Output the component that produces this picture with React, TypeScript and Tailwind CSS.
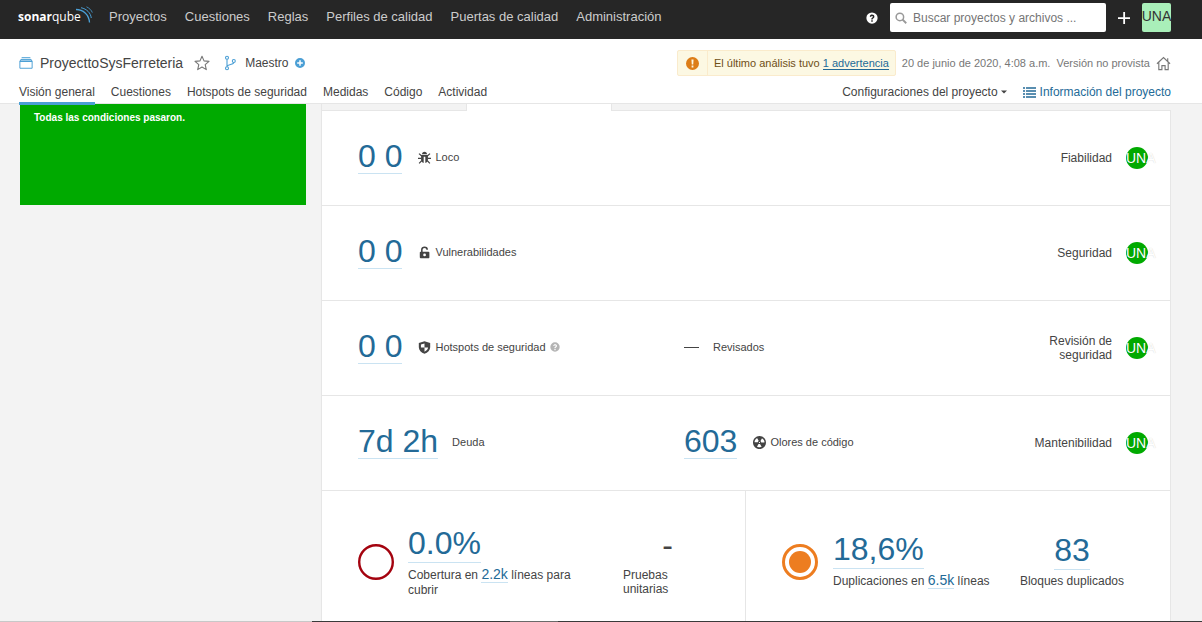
import type { ReactNode } from 'react';

type IconProps = { className?: string };

function Svg({ className = 'size-4', children }: { className?: string; children: ReactNode }) {
  return (
    <svg viewBox="0 0 16 16" fill="currentColor" fillRule="evenodd" aria-hidden="true" className={`shrink-0 ${className}`}>
      {children}
    </svg>
  );
}

const BugIcon = ({ className }: IconProps) => (
  <Svg className={className}>
    <path d="M4.800 4C5 2 6.200.8 8 .8S11 2 11.200 4z" />
    <path d="M3.800 4.800h8.400v6.400c0 2-1.400 3.300-3.200 3.500V7H7v7.700c-1.800-.2-3.200-1.500-3.200-3.500z" />
    <path d="M1.200 3.200 4.600 6.200M14.800 3.200l-3.400 3M0 9h4M16 9h-4M1.400 15.200l3.200-3.400M14.600 15.200l-3.200-3.400" stroke="currentColor" strokeWidth="1.500" fill="none" />
  </Svg>
);

const LockIcon = ({ className }: IconProps) => (
  <Svg className={className}>
    <path d="M3.300 7h9.600c.7 0 1.100.5 1.100 1.100v5.700c0 .7-.5 1.200-1.100 1.200H3.300c-.7 0-1.100-.5-1.100-1.200V8.100C2.200 7.500 2.600 7 3.300 7zm4.800 2.300a1.700 1.700 0 1 0 0 3.400 1.700 1.700 0 0 0 0-3.400z" />
    <path d="M4.700 7.500V4.600c0-1.900 1.400-3 3.300-3s3.300 1.100 3.300 2.900" stroke="currentColor" strokeWidth="1.900" fill="none" />
  </Svg>
);

const ShieldIcon = ({ className }: IconProps) => (
  <Svg className={className}>
    <path d="M8 .4 15 2.600v5c0 3.700-2.900 6.500-7 8.200-4.100-1.700-7-4.500-7-8.200v-5zM8 3 3.600 4.300V8H8zm0 5v5.100c2.500-1.200 4.200-2.800 4.400-5.100z" />
  </Svg>
);

const CodeSmellIcon = ({ className }: IconProps) => (
  <Svg className={className}>
    <g transform="translate(-2.670 -2.670) scale(1.333)">
      <path d="M8 2C4.700 2 2 4.700 2 8s2.700 6 6 6 6-2.700 6-6-2.700-6-6-6zm-.5 5.500h.9v.9h-.9v-.9zm-3.800.2c-.1 0-.2-.1-.2-.2 0-.4.1-1.200.6-2S5.300 4.200 5.600 4c.2 0 .3 0 .3.1l1.300 2.300c0 .1 0 .2-.1.2-.1.2-.2.3-.3.5-.1.2-.2.4-.2.5 0 .1-.1.2-.2.2l-2.700-.1zM9.900 12c-.3.2-1.100.5-2 .5-.9 0-1.700-.3-2-.5-.1 0-.1-.2-.1-.3l1.300-2.300c0-.1.1-.1.200-.1.2.1.3.1.5.1s.4 0 .5-.1c.1 0 .2 0 .2.1l1.300 2.300c.2.200.2.300.1.300zm2.500-4.100L9.700 8c-.1 0-.2-.1-.2-.2 0-.2-.1-.4-.2-.5 0-.1-.2-.3-.3-.4-.1 0-.1-.1-.1-.2l1.300-2.300c.1-.1.2-.1.3-.1.3.2 1 .7 1.500 1.500s.6 1.600.6 2c0 0-.1.1-.2.1z" />
    </g>
  </Svg>
);

const HelpIcon = ({ className }: IconProps) => (
  <Svg className={className}>
    <path d="M8 .5a7.500 7.500 0 1 1 0 15 7.500 7.500 0 0 1 0-15zM7 11v2h2v-2zM5 5.900l1.700.6c.2-.8.7-1.200 1.300-1.200.7 0 1.200.4 1.200 1 0 1.100-2.200 1.300-2.200 3.200v.5h1.900v-.3c0-1.100 2.300-1.400 2.300-3.500C11.200 4.500 9.900 3.400 8.100 3.400 6.500 3.400 5.400 4.300 5 5.900z" />
  </Svg>
);

const Logo = () => (
  <a href="#inicio" aria-label="sonarqube" className="flex h-6 items-center font-['Open_Sans',sans-serif] text-[12px] leading-5 text-white">
    <span className="font-bold">sonar</span>
    <span>qube</span>
    <svg viewBox="0 0 18 18" className="mb-1 -ml-1.5 size-[18px]" fill="none" stroke="#4b9fd5" aria-hidden="true">
      <path d="M1 3.500C8 3.500 14 8.500 14.500 16.500" strokeWidth="1.300" />
      <path d="M6 1.700C12 3 15.600 7 16.300 12" strokeWidth="1" />
      <path d="M11.500.8C14.500 2.200 16.500 4.300 17.300 6.600" strokeWidth=".8" />
    </svg>
  </a>
);

const mainLinks = ['Proyectos', 'Cuestiones', 'Reglas', 'Perfiles de calidad', 'Puertas de calidad', 'Administración'];
const projectLinks = ['Visión general', 'Cuestiones', 'Hotspots de seguridad', 'Medidas', 'Código', 'Actividad'];

function TopBar() {
  return (
    <header className="flex h-[39px] items-start bg-[#262626] pr-[31px] pl-[18px]">
      <div className="mt-[5px] w-[91px]">
        <Logo />
      </div>
      <nav className="mt-2 flex gap-[18px] text-[13px] leading-[18px] text-[#ccc]">
        {mainLinks.map((l) => (
          <a key={l} href="#nav" className="whitespace-nowrap">{l}</a>
        ))}
      </nav>
      <div className="mt-[3px] ml-auto flex items-center">
        <button type="button" aria-label="Ayuda" className="mr-3 text-white">
          <HelpIcon className="size-3" />
        </button>
        <label className="flex h-[29px] w-[216px] items-center rounded-[2px] bg-white pl-[5px]">
          <Svg className="size-3 text-[#999]">
            <circle cx="6.500" cy="6.500" r="5" fill="none" stroke="currentColor" strokeWidth="2" />
            <path d="m10 10 5 5" stroke="currentColor" strokeWidth="2.400" />
          </Svg>
          <input
            type="search"
            aria-label="Buscar"
            placeholder="Buscar proyectos y archivos ..."
            className="ml-1.5 min-w-0 flex-1 bg-transparent text-[12px] text-[#444] outline-none placeholder:text-[#757575]"
          />
        </label>
        <button type="button" aria-label="Crear" className="ml-3 text-white">
          <Svg className="size-3">
            <path d="M7 0h2.400v7H16v2.400H9.400V16H7V9.400H0V7h7z" />
          </Svg>
        </button>
        <button type="button" className="ml-3 flex h-[29px] w-[29px] justify-center rounded-[2px] bg-[#a9efb9] text-[14px] leading-[26px] text-[#333]">
          UNA
        </button>
      </div>
    </header>
  );
}

function ProjectHeader() {
  return (
    <section className="flex flex-col border-b border-[#e6e6e6] bg-white pr-[31px] pl-[19px]">
      <div className="flex items-center pt-[11px]">
        <Svg className="size-[14px] text-[#4b9fd5]">
          <path d="M1 6.200h14V14H1zM2.200 3.900h11.600L15 6.200H1zM3 1.900h10" fill="none" stroke="currentColor" strokeWidth="1.100" />
          <path d="M2.200 3.900h11.600L15 6.200H1z" opacity=".5" />
        </Svg>
        <h1 className="ml-[7px] text-[14px] leading-[18px] text-[#444]">ProyecttoSysFerreteria</h1>
        <button type="button" aria-label="Favorito" className="ml-[11px] text-[#777]">
          <Svg className="size-4">
            <path d="m8 1.300 2 4.600 5 .5-3.800 3.300 1.100 4.900L8 12l-4.300 2.600 1.100-4.900L1 6.400l5-.5z" fill="none" stroke="currentColor" strokeWidth="1.100" strokeLinejoin="round" />
          </Svg>
        </button>
        <Svg className="ml-[13px] size-4 text-[#4b9fd5]">
          <g fill="none" stroke="currentColor" strokeWidth="1.100">
            <circle cx="4" cy="2.700" r="1.500" />
            <circle cx="4" cy="13.300" r="1.500" />
            <circle cx="10.800" cy="6" r="1.500" />
            <path d="M4 4.200v7.600M10.800 7.500C10.800 10 4.500 9 4 11.500" />
          </g>
        </Svg>
        <span className="ml-1.5 text-[12px] text-[#444]">Maestro</span>
        <button type="button" aria-label="Más ramas" className="ml-1.5 text-[#4b9fd5]">
          <Svg className="size-2.5">
            <path d="M8 0a8 8 0 1 1 0 16A8 8 0 0 1 8 0zM6.800 3.500v3.300H3.500v2.400h3.300v3.300h2.400V9.200h3.300V6.800H9.200V3.500z" />
          </Svg>
        </button>
        <div className="ml-auto flex items-center text-[11px] text-[#777]">
          <div className="flex h-[26px] items-center rounded-[2px] border border-[#faebcc] bg-[#fcf8e3] text-[#6f4f17]">
            <span className="flex h-full w-[30px] items-center justify-center border-r border-[#faebcc] text-[#dd7d18]">
              <Svg className="size-[13px]">
                <path d="M8 0a8 8 0 1 1 0 16A8 8 0 0 1 8 0zM6.700 3l.4 6.200h1.800L9.300 3zM6.900 10.500v2.300h2.200v-2.300z" />
              </Svg>
            </span>
            <p className="px-1.5">
              El último análisis tuvo{' '}
              <a href="#advertencia" className="border-b border-[#236a97] text-[#236a97]">1 advertencia</a>
            </p>
          </div>
          <time className="ml-1.5">20 de junio de 2020, 4:08 a.m.</time>
          <span className="ml-1.5">Versión no provista</span>
          <button type="button" aria-label="Página de inicio" className="ml-1.5">
            <Svg className="size-[15px]">
              <path d="M1 8.300 8 1.600l7 6.700M3 7v7.500h3.300v-4.300h3.400v4.300H13V7M12.500 5.500V2.500" fill="none" stroke="currentColor" strokeWidth="1.200" />
            </Svg>
          </button>
        </div>
      </div>
      <div className="flex items-start pt-2 text-[12px] leading-4 text-[#444]">
        <nav className="flex gap-4">
          {projectLinks.map((l, i) => (
            <a
              key={l}
              href="#seccion"
              className={
                i === 0
                  ? 'relative pb-[3px] whitespace-nowrap after:absolute after:inset-x-0 after:top-[18px] after:h-[3px] after:bg-[#4b9fd5]'
                  : 'pb-[3px] whitespace-nowrap'
              }
            >
              {l}
            </a>
          ))}
        </nav>
        <button type="button" className="ml-auto flex items-center gap-[3px]">
          Configuraciones del proyecto
          <Svg className="size-1.5">
            <path d="M0 4h16l-8 8z" />
          </Svg>
        </button>
        <a href="#informacion" className="ml-4 flex items-center gap-1 text-[#236a97]">
          <Svg className="size-[13px]">
            <path d="M0 1.500h2.500v2H0zM3.700 1.500H16v2H3.700zM0 5.200h2.500v2H0zM3.700 5.200H16v2H3.700zM0 8.900h2.500v2H0zM3.700 8.900H16v2H3.700zM0 12.600h2.500v2H0zM3.700 12.600H16v2H3.700z" />
          </Svg>
          Información del proyecto
        </a>
      </div>
    </section>
  );
}

const Value = ({ children }: { children: ReactNode }) => (
  <a href="#medida" className="mb-0.5 border-b border-[#cae3f2] text-[32px] leading-[33px] whitespace-nowrap text-[#236a97]">
    {children}
  </a>
);

const BigValue = ({ children }: { children: ReactNode }) => (
  <a href="#medida" className="border-b border-[#cae3f2] text-[32px] leading-[37px] whitespace-nowrap text-[#236a97]">
    {children}
  </a>
);

const InlineValue = ({ children }: { children: ReactNode }) => (
  <a href="#lineas" className="border-b border-[#cae3f2] text-[14px] leading-[14px] text-[#236a97]">{children}</a>
);

function Label({ icon, children }: { icon?: ReactNode; children: ReactNode }) {
  return (
    <span className={`mb-0.5 flex items-center gap-1 text-[11px] leading-4 text-[#444] ${icon ? 'ml-4' : 'ml-3.5'}`}>
      {icon}
      {children}
    </span>
  );
}

function Row({ first, second, rating }: { first: ReactNode; second?: ReactNode; rating: string }) {
  return (
    <div className="grid grid-cols-[326fr_314fr_150fr] items-center border-b border-[#e6e6e6] py-[29px] pr-[22px] pl-9">
      <div className="flex items-center">{first}</div>
      <div className="flex items-center">{second}</div>
      <div className="flex items-center justify-end gap-3.5 text-right text-[12px] leading-[14px] text-[#444]">
        <span className="max-w-20">{rating}</span>
        <a
          href="#calificacion"
          className="flex size-[22px] items-center rounded-full bg-[#0a0] text-[14px] text-white [text-shadow:0_0_1px_rgba(0,0,0,0.2)]"
        >
          UNA
        </a>
      </div>
    </div>
  );
}

export default function App() {
  return (
    <div className="flex min-h-screen flex-col bg-[#f3f3f3] font-['Liberation_Sans',Arial,sans-serif]">
      <TopBar />
      <ProjectHeader />
      <main className="flex flex-1 items-stretch gap-[15px] pr-[31px] pl-5">
        <aside className="w-[286px] shrink-0">
          <div className="bg-[#0a0] px-3.5 pt-1.5 pb-[79px] text-[10px] leading-4 font-bold text-white">
            Todas las condiciones pasaron.
          </div>
        </aside>
        <div className="flex min-w-0 flex-1 flex-col">
          <div className="flex h-[7px] items-stretch">
            <div className="w-[146px] border-x border-b border-[#e6e6e6]" />
            <div className="w-[145px] border-r border-[#e6e6e6] bg-white" />
            <div className="flex-1 border-b border-[#e6e6e6]" />
          </div>
          <div className="flex flex-1 flex-col border-x border-[#e6e6e6] bg-white">
            <Row first={<><Value>0 0</Value><Label icon={<BugIcon className="size-[13px]" />}>Loco</Label></>} rating="Fiabilidad" />
            <Row first={<><Value>0 0</Value><Label icon={<LockIcon className="size-[13px]" />}>Vulnerabilidades</Label></>} rating="Seguridad" />
            <Row
              first={
                <>
                  <Value>0 0</Value>
                  <Label icon={<ShieldIcon className="size-[13px]" />}>
                    Hotspots de seguridad
                    <HelpIcon className="size-2.5 text-[#b4b4b4]" />
                  </Label>
                </>
              }
              second={<><span className="mb-0.5 h-px w-[15px] bg-[#444]" /><Label>Revisados</Label></>}
              rating="Revisión de seguridad"
            />
            <Row
              first={<><Value>7d 2h</Value><Label>Deuda</Label></>}
              second={<><Value>603</Value><Label icon={<CodeSmellIcon className="size-[13px]" />}>Olores de código</Label></>}
              rating="Mantenibilidad"
            />
            <div className="grid flex-1 grid-cols-2 text-[12px] leading-[15px] text-[#444]">
              <div className="flex items-center border-r border-[#e6e6e6] pt-8 pr-[72px] pb-5 pl-9">
                <svg viewBox="0 0 36 36" className="size-9 shrink-0" aria-hidden="true">
                  <circle cx="18" cy="18" r="16.800" fill="none" stroke="#a4030f" strokeWidth="2.400" />
                </svg>
                <div className="ml-3.5 flex max-w-[180px] flex-col items-start gap-1 pb-0.5">
                  <BigValue>0.0%</BigValue>
                  <p>
                    Cobertura en <InlineValue>2.2k</InlineValue> líneas para <span className="block">cubrir</span>
                  </p>
                </div>
                <div className="ml-auto flex w-[50px] flex-col gap-1 pb-0.5 leading-[14px]">
                  <span className="text-right text-[32px] leading-[37px]">-</span>
                  <span>Pruebas unitarias</span>
                </div>
              </div>
              <div className="flex items-center pt-8 pr-[46px] pb-5 pl-9">
                <svg viewBox="0 0 36 36" className="size-9 shrink-0" aria-hidden="true">
                  <circle cx="18" cy="18" r="16.500" fill="none" stroke="#ed7d20" strokeWidth="3" />
                  <circle cx="18" cy="18" r="11" fill="#ed7d20" />
                </svg>
                <div className="ml-[15px] flex flex-col items-start gap-1 pb-1">
                  <BigValue>18,6%</BigValue>
                  <p>Duplicaciones en <InlineValue>6.5k</InlineValue> líneas</p>
                </div>
                <div className="ml-auto flex flex-col items-center gap-1 pb-1">
                  <BigValue>83</BigValue>
                  <span>Bloques duplicados</span>
                </div>
              </div>
            </div>
          </div>
        </div>
      </main>
      <div className="flex h-px">
        <div className="w-[312px] bg-[#c8c8c8]" />
        <div className="w-[198px] bg-[#3a3a3a]" />
        <div className="w-12 bg-[#6a6a6a]" />
        <div className="flex-1 bg-[#3a3a3a]" />
      </div>
    </div>
  );
}
